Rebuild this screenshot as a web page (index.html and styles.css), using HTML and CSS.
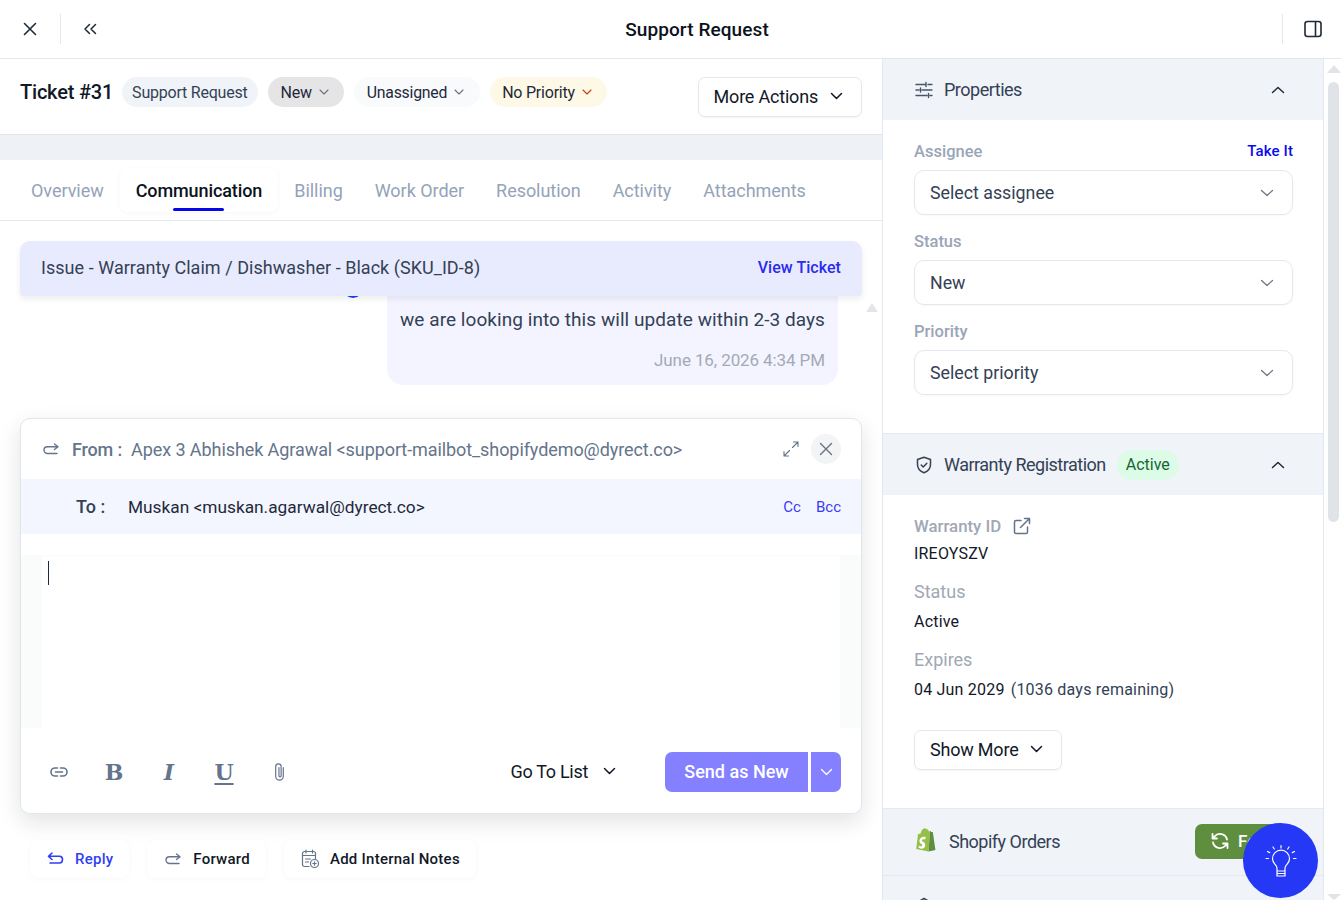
FILE: index.html
```html
<!DOCTYPE html>
<html lang="en">
<head>
    <meta charset="UTF-8">
    <meta name="viewport" content="width=device-width, initial-scale=1.0">
    <title>Support Request</title>
    <link rel="stylesheet" href="styles.css">
</head>
<body>
    <div class="app">
        <header class="topbar">
            <div class="topbar-left">
                <button class="icon-btn">
                    <svg width="18" height="18" viewBox="0 0 18 18" fill="none" stroke="#1f2937" stroke-width="1.6" stroke-linecap="round"><path d="M3.5 3.5l11 11M14.5 3.5l-11 11"/></svg>
                </button>
                <span class="topbar-sep"></span>
                <button class="icon-btn">
                    <svg width="16" height="16" viewBox="0 0 16 16" fill="none" stroke="#1f2937" stroke-width="1.5" stroke-linecap="round" stroke-linejoin="round"><path d="M7.5 3.5L3 8l4.500 4.500M13.500 3.500L9 8l4.500 4.500"/></svg>
                </button>
            </div>
            <h1 class="topbar-title">Support Request</h1>
            <div class="topbar-right">
                <span class="topbar-sep"></span>
                <button class="icon-btn">
                    <svg width="20" height="20" viewBox="0 0 20 20" fill="none" stroke="#1f2937" stroke-width="1.6"><rect x="2" y="2.5" width="16" height="15" rx="2.5"/><path d="M12.5 2.5v15"/></svg>
                </button>
            </div>
        </header>

        <div class="workspace">
            <main class="ticket">
                <div class="ticket-head">
                    <div class="ticket-title">Ticket #31</div>
                    <span class="pill pill-type">Support Request</span>
                    <span class="pill pill-status">New <svg class="pill-caret" width="10" height="6" viewBox="0 0 10 6" fill="none" stroke="#6b7280" stroke-width="1.1" stroke-linecap="round" stroke-linejoin="round"><path d="M1 1l4 4 4-4"/></svg></span>
                    <span class="pill pill-assignee">Unassigned <svg class="pill-caret" width="10" height="6" viewBox="0 0 10 6" fill="none" stroke="#6b7280" stroke-width="1.1" stroke-linecap="round" stroke-linejoin="round"><path d="M1 1l4 4 4-4"/></svg></span>
                    <span class="pill pill-priority">No Priority <svg class="pill-caret" width="10" height="6" viewBox="0 0 10 6" fill="none" stroke="#c2410c" stroke-width="1.1" stroke-linecap="round" stroke-linejoin="round"><path d="M1 1l4 4 4-4"/></svg></span>
                    <button class="btn-outline btn-more">More Actions
                        <svg width="13" height="8" viewBox="0 0 13 8" fill="none" stroke="#111827" stroke-width="1.5" stroke-linecap="round" stroke-linejoin="round"><path d="M1.500 1.500l5 5 5-5"/></svg>
                    </button>
                </div>
                <div class="band"></div>
                <nav class="tabs">
                    <a class="tab">Overview</a>
                    <a class="tab active">Communication</a>
                    <a class="tab">Billing</a>
                    <a class="tab">Work Order</a>
                    <a class="tab">Resolution</a>
                    <a class="tab">Activity</a>
                    <a class="tab">Attachments</a>
                </nav>

                <div class="thread">
                    <div class="issue-bar">
                        <span class="issue-text">Issue - Warranty Claim / Dishwasher - Black (SKU_ID-8)</span>
                        <a class="issue-link">View Ticket</a>
                    </div>
                    <div class="bubble">
                        <span class="bubble-avatar"></span>
                        <div class="bubble-text">we are looking into this will update within 2-3 days</div>
                        <div class="bubble-time">June 16, 2026 4:34 PM</div>
                    </div>
                    <span class="thread-arrow"></span>

                    <section class="composer">
                        <div class="from-row">
                            <svg width="16" height="13" viewBox="0 0 16 13" fill="none" stroke="#64748b" stroke-width="1.4" stroke-linecap="round" stroke-linejoin="round"><path d="M11.500 1L15 3.800l-3.500 2.700M14.500 3.800H4.500C2.500 3.800 1 5.300 1 7.100s1.500 3.400 3.500 3.400h9.500"/></svg>
                            <span class="from-label">From :</span>
                            <span class="from-value">Apex 3 Abhishek Agrawal &lt;support-mailbot_shopifydemo@dyrect.co&gt;</span>
                            <svg class="expand-icon" width="16" height="16" viewBox="0 0 16 16" fill="none" stroke="#64748b" stroke-width="1.1" stroke-linecap="round" stroke-linejoin="round"><path d="M9.500 6.500L15 1M10.500 1H15v4.500M6.500 9.500L1 15M1 10.500V15h4.500"/></svg>
                            <span class="close-round">
                                <svg width="14" height="14" viewBox="0 0 14 14" fill="none" stroke="#6b7280" stroke-width="1.4" stroke-linecap="round"><path d="M1.500 1.500l11 11M12.500 1.500l-11 11"/></svg>
                            </span>
                        </div>
                        <div class="to-row">
                            <span class="to-label">To :</span>
                            <span class="to-value">Muskan &lt;muskan.agarwal@dyrect.co&gt;</span>
                            <a class="cc-link">Cc</a>
                            <a class="cc-link">Bcc</a>
                        </div>
                        <div class="editor-wrap">
                            <div class="editor"><span class="caret"></span></div>
                        </div>
                        <div class="toolbar">
                            <button class="tool tool-link">
                                <svg width="18" height="10" viewBox="0 0 18 10" fill="none" stroke="#64748b" stroke-width="1.6" stroke-linecap="round"><path d="M7.500 1H5a4 4 0 0 0 0 8h2.500M10.500 1H13a4 4 0 0 1 0 8h-2.500M5.500 5h7"/></svg>
                            </button>
                            <button class="tool tool-b">B</button>
                            <button class="tool tool-i">I</button>
                            <button class="tool tool-u">U</button>
                            <button class="tool tool-clip">
                                <svg width="13" height="20" viewBox="0 0 12 18" fill="none" stroke="#64748b" stroke-width="1.1" stroke-linecap="round"><path d="M9.500 5v8a3.500 3.500 0 0 1-7 0V4a2.500 2.500 0 0 1 5 0v8.500a1 1 0 0 1-2 0V5"/></svg>
                            </button>
                            <button class="goto-list">Go To List
                                <svg width="13" height="8" viewBox="0 0 13 8" fill="none" stroke="#111827" stroke-width="1.5" stroke-linecap="round" stroke-linejoin="round"><path d="M1.500 1.500l5 5 5-5"/></svg>
                            </button>
                            <button class="send-btn">Send as New</button>
                            <button class="send-caret">
                                <svg width="13" height="8" viewBox="0 0 13 8" fill="none" stroke="#fff" stroke-width="1.3" stroke-linecap="round" stroke-linejoin="round"><path d="M1.500 1.500l5 5 5-5"/></svg>
                            </button>
                        </div>
                    </section>

                    <div class="actions">
                        <button class="action action-reply">
                            <svg width="17" height="14" viewBox="0 0 17 14" fill="none" stroke="#2f3ff5" stroke-width="1.6" stroke-linecap="round" stroke-linejoin="round"><path d="M5 1L1.500 4.300 5 7.500M2 4.300h10.500c1.800 0 3 1.300 3 3.300s-1.200 3.400-3 3.400H3"/></svg>
                            Reply
                        </button>
                        <button class="action action-forward">
                            <svg width="16" height="13" viewBox="0 0 16 13" fill="none" stroke="#64748b" stroke-width="1.4" stroke-linecap="round" stroke-linejoin="round"><path d="M11.500 1L15 3.800l-3.500 2.700M14.500 3.800H4.500C2.500 3.800 1 5.300 1 7.100s1.500 3.400 3.500 3.400h9.500"/></svg>
                            Forward
                        </button>
                        <button class="action action-notes">
                            <svg width="19" height="20" viewBox="0 0 19 20" fill="none" stroke="#64748b" stroke-width="1.2" stroke-linecap="round" stroke-linejoin="round"><path d="M8 17.500H3.500a2 2 0 0 1-2-2V4.500a2 2 0 0 1 2-2h9a2 2 0 0 1 2 2V10M5 1v3M11.500 1v3M1.500 6.500h13M4.500 10h5M4.500 13h3"/><circle cx="13.500" cy="14.500" r="4"/><path d="M13.500 12.800v3.400M11.800 14.500h3.400"/></svg>
                            Add Internal Notes
                        </button>
                    </div>
                </div>
            </main>

            <aside class="side">
                <div class="side-panel">
                    <div class="side-head">
                        <svg class="side-icon" width="18" height="18" viewBox="0 0 18 18" fill="none" stroke="#475569" stroke-width="1.4" stroke-linecap="round"><path d="M1 3.500h9M13 3.500h4M1 9h3M7 9h10M1 14.500h11M15 14.500h2M11 1.500v4M5.500 7v4M13.500 12.500v4"/></svg>
                        <span class="side-title">Properties</span>
                        <svg class="side-chevron" width="14" height="8" viewBox="0 0 14 8" fill="none" stroke="#1f2937" stroke-width="1.5" stroke-linecap="round" stroke-linejoin="round"><path d="M1.500 6.500L7 1.500l5.500 5"/></svg>
                    </div>
                    <div class="props">
                        <div class="field-label">
                            <span>Assignee</span>
                            <a class="take-it">Take It</a>
                        </div>
                        <div class="select">Select assignee
                            <svg width="14" height="8" viewBox="0 0 14 8" fill="none" stroke="#6b7280" stroke-width="1.2" stroke-linecap="round" stroke-linejoin="round"><path d="M1.500 1.500L7 6.500l5.500-5"/></svg>
                        </div>
                        <div class="field-label"><span>Status</span></div>
                        <div class="select">New
                            <svg width="14" height="8" viewBox="0 0 14 8" fill="none" stroke="#6b7280" stroke-width="1.2" stroke-linecap="round" stroke-linejoin="round"><path d="M1.500 1.500L7 6.500l5.500-5"/></svg>
                        </div>
                        <div class="field-label"><span>Priority</span></div>
                        <div class="select">Select priority
                            <svg width="14" height="8" viewBox="0 0 14 8" fill="none" stroke="#6b7280" stroke-width="1.2" stroke-linecap="round" stroke-linejoin="round"><path d="M1.500 1.500L7 6.500l5.500-5"/></svg>
                        </div>
                    </div>

                    <div class="side-head side-head-line">
                        <svg class="side-icon" width="18" height="18" viewBox="0 0 18 18" fill="none" stroke="#374151" stroke-width="1.5" stroke-linecap="round" stroke-linejoin="round"><path d="M9 1.200l6.500 2.300v5c0 4-2.800 6.900-6.500 8.300-3.700-1.400-6.500-4.300-6.500-8.300v-5z"/><path d="M6.200 9l2 2 3.600-3.700"/></svg>
                        <span class="side-title">Warranty Registration</span>
                        <span class="badge-active">Active</span>
                        <svg class="side-chevron" width="14" height="8" viewBox="0 0 14 8" fill="none" stroke="#1f2937" stroke-width="1.5" stroke-linecap="round" stroke-linejoin="round"><path d="M1.500 6.500L7 1.500l5.500 5"/></svg>
                    </div>
                    <div class="warranty">
                        <div class="w-label w-label-id">Warranty ID
                            <svg width="18" height="18" viewBox="0 0 18 18" fill="none" stroke="#64748b" stroke-width="1.5" stroke-linecap="round" stroke-linejoin="round"><path d="M8 3.500H3a1.500 1.500 0 0 0-1.500 1.500v10A1.500 1.500 0 0 0 3 16.500h10a1.500 1.500 0 0 0 1.500-1.500v-5M7.500 10.500L16.500 1.500M11.500 1.500h5v5"/></svg>
                        </div>
                        <div class="w-value">IREOYSZV</div>
                        <div class="w-label">Status</div>
                        <div class="w-value">Active</div>
                        <div class="w-label">Expires</div>
                        <div class="w-value">04 Jun 2029 <span class="w-muted">(1036 days remaining)</span></div>
                        <button class="btn-outline btn-show">Show More
                            <svg width="13" height="8" viewBox="0 0 13 8" fill="none" stroke="#111827" stroke-width="1.5" stroke-linecap="round" stroke-linejoin="round"><path d="M1.500 1.500l5 5 5-5"/></svg>
                        </button>
                    </div>

                    <div class="side-head side-head-shopify">
                        <svg class="shopify-logo" width="22" height="26" viewBox="0 0 22 26"><path fill="#95bf47" d="M15 3.200l-1 .3C13.500 2 12.700 1 11.500 1c-.1 0-.2 0-.3 0C10.800.5 10.400.3 10 .3 7.300.4 6 3.800 5.600 5.500l-2 .6c-.6.200-.6.200-.7.800L1.200 21l12.300 2.400 1.500-20.200z"/><path fill="#5e8e3e" d="M15.500 3.100c-.1 0-.3 0-.5.100l-1.500 20.200L20.500 22S17.900 4.400 17.800 4.300c0-.2-.2-.3-.300-.3l-1.300-.1-.7-.8z"/><path fill="#fff" d="M10.800 9.200l-.8 2.500s-.8-.4-1.700-.4c-1.400.1-1.400 1-1.400 1.200.1 1.200 3.200 1.500 3.400 4.300.1 2.300-1.200 3.800-3.200 3.900-2.300.1-3.600-1.200-3.600-1.200l.5-2.100s1.300 1 2.300.9c.7 0 .9-.6.900-.9-.1-1.500-2.600-1.500-2.800-4.100-.1-2.200 1.300-4.400 4.500-4.600 1.200 0 1.900.3 1.900.3z"/></svg>
                        <span class="side-title">Shopify Orders</span>
                        <button class="fetch-btn">
                            <svg width="18" height="18" viewBox="0 0 18 18" fill="none" stroke="#fff" stroke-width="1.8" stroke-linecap="round" stroke-linejoin="round"><path d="M16 7.500A7.200 7.200 0 0 0 3.500 4.500L1.500 6.500M1.500 2v4.500H6M2 10.500a7.200 7.200 0 0 0 12.500 3l2-2M16.500 16v-4.500H12"/></svg>
                            Fetch
                        </button>
                    </div>
                    <div class="side-head side-head-next">
                        <svg class="side-icon" width="18" height="18" viewBox="0 0 18 18" fill="none" stroke="#374151" stroke-width="1.5" stroke-linejoin="round"><path d="M9 1.500l7 4v7l-7 4-7-4v-7z"/></svg>
                        <span class="side-title">Bundle</span>
                    </div>
                </div>
                <div class="side-scrollbar">
                    <span class="scroll-up"></span>
                    <span class="scroll-thumb"></span>
                    <span class="scroll-down"></span>
                </div>
            </aside>
        </div>

        <button class="help-fab">
            <svg width="32" height="34" viewBox="0 0 32 34" fill="none" stroke="#fff" stroke-width="1.2" stroke-linecap="round" stroke-linejoin="round"><path d="M12 27v-3c0-1.500-1-2.500-2-3.700-1.200-1.400-2.500-3-2.500-5.600a8.500 8.500 0 0 1 17 0c0 2.600-1.300 4.200-2.500 5.600-1 1.200-2 2.200-2 3.700v3M12 27h8v5h-8zM12 29.500h8M16 1.500V4M8 3l1.300 2M24 3l-1.300 2M2.500 7.500l2.200 1.100M29.500 7.500l-2.200 1.100M1 14.500h2.500M28.500 14.500H31"/></svg>
        </button>
    </div>
</body>
</html>
```

FILE: styles.css
```css
* {
    box-sizing: border-box;
}

html, body {
    margin: 0;
    height: 100%;
    overflow: hidden;
}

body {
    font-family: Roboto, 'Noto Sans', sans-serif;
    color: #111827;
    background: #fff;
}

button {
    font-family: inherit;
    border: none;
    background: none;
    padding: 0;
    cursor: pointer;
}

.app {
    height: 900px;
    display: flex;
    flex-direction: column;
    position: relative;
}

/* top bar */
.topbar {
    height: 59px;
    flex: none;
    display: flex;
    align-items: center;
    border-bottom: 1px solid #e2e8f0;
    padding: 0 18px 0 21px;
}

.topbar-left, .topbar-right {
    display: flex;
    align-items: center;
    width: 400px;
}

.topbar-right {
    justify-content: flex-end;
    width: 60px;
}

.topbar-left .topbar-sep {
    margin: 0 21px 0 21px;
}

.topbar-right .topbar-sep {
    margin-right: 20px;
}

.topbar-sep {
    width: 1px;
    height: 30px;
    background: #e2e8f0;
}

.icon-btn {
    display: flex;
}

.topbar-title {
    flex: 1;
    text-align: center;
    margin: 0 0 0 56px;
    font-size: 19px;
    font-weight: 500;
    letter-spacing: 0.1px;
    color: #0b1220;
    padding-right: 346px;
}

.workspace {
    flex: 1;
    display: flex;
    min-height: 0;
}

/* left column */
.ticket {
    width: 883px;
    flex: none;
    border-right: 1px solid #e2e8f0;
    display: flex;
    flex-direction: column;
    overflow: hidden;
}

.ticket-head {
    height: 75px;
    flex: none;
    display: flex;
    align-items: flex-start;
    padding: 18px 20px 0;
}

.ticket-title {
    font-size: 20px;
    font-weight: 500;
    letter-spacing: -0.2px;
    line-height: 30px;
    color: #111827;
    margin-right: 9px;
}

.pill {
    height: 30px;
    display: inline-flex;
    align-items: center;
    border-radius: 15px;
    font-size: 16px;
    letter-spacing: -0.22px;
    color: #1e293b;
    padding: 0 10px;
    margin-right: 10px;
    white-space: nowrap;
}

.pill-caret {
    margin-left: 7px;
}

.pill-type {
    background: #f0f4f9;
    color: #334155;
    padding: 0 11px 0 10px;
}

.pill-status {
    background: #e5e5e5;
    padding: 0 15px 0 12px;
}

.pill-assignee {
    background: #f8fafc;
    font-size: 15.8px;
    padding: 0 16px 0 13px;
}

.pill-priority {
    background: #fef9e7;
    padding: 0 15px 0 12px;
}

.btn-outline {
    display: inline-flex;
    align-items: center;
    height: 40px;
    border: 1px solid #e2e8f0;
    border-radius: 7px;
    background: #fff;
    font-size: 18px;
    letter-spacing: -0.2px;
    color: #111827;
    box-shadow: 0 1px 2px rgba(15, 23, 42, 0.04);
}

.btn-more {
    margin-left: auto;
    padding: 0 18px 2px 15px;
    gap: 12px;
}

.band {
    height: 26px;
    flex: none;
    background: #eef1f5;
    border-top: 1px solid #e2e6ea;
}

.tabs {
    height: 61px;
    flex: none;
    display: flex;
    align-items: center;
    padding: 0 16px 0 15px;
    border-bottom: 1px solid #e2e8f0;
}

.tab {
    font-size: 18px;
    letter-spacing: -0.04px;
    color: #94a3b8;
    padding: 0 16px;
    height: 44px;
    line-height: 45px;
    position: relative;
}

.tab.active {
    color: #0b1220;
    font-weight: 500;
    letter-spacing: -0.1px;
    background: #fff;
    border-radius: 8px;
    box-shadow: 0 1px 4px rgba(15, 23, 42, 0.04);
}

.tab.active::after {
    content: "";
    position: absolute;
    left: 53px;
    bottom: 1px;
    width: 51px;
    height: 3px;
    border-radius: 2px;
    background: #0606e8;
}

/* conversation */
.thread {
    flex: 1;
    position: relative;
    padding: 20px 20px 0;
    min-height: 0;
}

.issue-bar {
    position: relative;
    z-index: 2;
    height: 55px;
    display: flex;
    align-items: center;
    justify-content: space-between;
    padding: 0 21px 2px;
    background: #e8eafd;
    border-radius: 10px 10px 4px 4px;
    box-shadow: 0 3px 6px rgba(15, 23, 42, 0.08);
}

.issue-text {
    font-size: 18px;
    letter-spacing: 0.04px;
    color: #334155;
}

.issue-link {
    font-size: 16px;
    font-weight: 500;
    letter-spacing: 0.05px;
    color: #2a2af0;
}

.bubble {
    position: relative;
    width: 451px;
    height: 89px;
    margin: 0 24px 0 auto;
    padding: 11px 13px 0;
    background: #f3f4ff;
    border-radius: 0 0 16px 16px;
}

.bubble-avatar {
    position: absolute;
    left: -44px;
    top: -18px;
    width: 20px;
    height: 20px;
    border-radius: 50%;
    background: #1f3bf5;
}

.bubble-text {
    font-size: 19px;
    letter-spacing: 0.06px;
    color: #334155;
    line-height: 26px;
    white-space: nowrap;
}

.bubble-time {
    margin-top: 17px;
    text-align: right;
    font-size: 17px;
    letter-spacing: -0.1px;
    color: #a3aab5;
}

.thread-arrow {
    position: absolute;
    left: 866px;
    top: 82px;
    border: 6px solid transparent;
    border-top: 0;
    border-bottom: 9px solid #e2e5ea;
}

.composer {
    margin-top: 33px;
    height: 396px;
    width: 842px;
    background: #fff;
    border: 1px solid #e2e6ec;
    border-radius: 10px;
    box-shadow: 0 8px 22px rgba(15, 23, 42, 0.12);
    display: flex;
    flex-direction: column;
    overflow: hidden;
}

.from-row {
    height: 60px;
    flex: none;
    display: flex;
    align-items: center;
    padding: 0 20px 0 22px;
    font-size: 18px;
    color: #64748b;
}

.from-label {
    margin-left: 13px;
    margin-right: 9px;
    font-weight: 500;
    letter-spacing: -0.15px;
}

.from-value {
    letter-spacing: -0.08px;
}

.expand-icon {
    margin-left: auto;
    margin-right: 12px;
}

.close-round {
    width: 30px;
    height: 30px;
    border-radius: 50%;
    background: #f3f4f6;
    display: flex;
    align-items: center;
    justify-content: center;
}

.to-row {
    height: 55px;
    flex: none;
    display: flex;
    align-items: center;
    background: #f3f6fe;
    padding: 0 20px 0 55px;
}

.to-label {
    width: 52px;
    font-size: 18px;
    font-weight: 500;
    color: #334155;
}

.to-value {
    font-size: 17.3px;
    color: #1e293b;
    flex: 1;
}

.cc-link {
    font-size: 15px;
    color: #3b3bf2;
    margin-left: 15px;
}

.editor-wrap {
    flex: 1;
    padding-top: 21px;
    min-height: 0;
}

.editor {
    height: 100%;
    background: #fff;
    border: solid #fafbfb;
    border-width: 1px 21px 0;
    padding: 5px 6px 0;
}

.caret {
    display: block;
    width: 1px;
    height: 24px;
    background: #1e293b;
}

.toolbar {
    height: 85px;
    flex: none;
    background: #fff;
    display: flex;
    align-items: flex-start;
    padding: 24px 20px 0 23px;
}

.tool {
    width: 30px;
    height: 40px;
    display: flex;
    align-items: center;
    justify-content: center;
    margin-right: 25px;
    color: #64748b;
    font-family: 'DejaVu Serif', serif;
    font-weight: 700;
    font-size: 22px;
}

.tool-i {
    font-style: italic;
}

.tool-u {
    text-decoration: underline;
    text-underline-offset: 3px;
    text-decoration-thickness: 2px;
}

.goto-list {
    margin-left: auto;
    height: 40px;
    display: flex;
    align-items: center;
    gap: 15px;
    padding-bottom: 2px;
    font-size: 18px;
    letter-spacing: -0.3px;
    color: #111827;
    margin-right: 49px;
}

.send-btn {
    height: 40px;
    width: 143px;
    padding-bottom: 2px;
    background: #8480ff;
    color: #fff;
    font-size: 18px;
    font-weight: 500;
    border-radius: 7px 0 0 7px;
    margin-right: 3px;
}

.send-caret {
    height: 40px;
    width: 30px;
    background: #8480ff;
    border-radius: 0 7px 7px 0;
    display: flex;
    align-items: center;
    justify-content: center;
}

.actions {
    display: flex;
    margin: 26px 0 0 10px;
    gap: 18px;
}

.action {
    height: 38px;
    display: flex;
    align-items: center;
    gap: 11px;
    padding: 0 16px 0 17px;
    font-size: 15px;
    font-weight: 500;
    letter-spacing: 0.25px;
    color: #111827;
    background: #fff;
    border-radius: 8px;
    box-shadow: 0 1px 6px rgba(15, 23, 42, 0.03);
}

.action-reply {
    color: #2f3ff5;
}

.action-forward {
    padding-left: 18px;
    gap: 12px;
}

.action-notes {
    gap: 10px;
}

/* right column */
.side {
    flex: 1;
    display: flex;
    min-width: 0;
}

.side-panel {
    width: 441px;
    flex: none;
    border-right: 1px solid #e2e8f0;
    overflow: hidden;
}

.side-head {
    height: 61px;
    display: flex;
    align-items: center;
    padding: 0 38px 0 32px;
    background: #f0f3f8;
}

.side-head-line {
    height: 62px;
    border-top: 1px solid #e5e8ee;
}

.side-head-shopify {
    height: 68px;
    padding-bottom: 2px;
    border-top: 1px solid #e5e8ee;
    border-bottom: 1px solid #e5e8ee;
}

.side-head-next {
    height: 50px;
    align-items: flex-start;
    padding-top: 21px;
}

.side-icon {
    margin-right: 11px;
    flex: none;
}

.side-title {
    font-size: 18px;
    letter-spacing: -0.5px;
    color: #334155;
}

.side-chevron {
    margin-left: auto;
}

.badge-active {
    height: 30px;
    display: inline-flex;
    align-items: center;
    padding: 0 9px;
    margin-left: 11px;
    border-radius: 15px;
    background: #dcfce7;
    color: #166534;
    font-size: 16px;
}

.props {
    height: 313px;
    padding: 19px 30px 0 31px;
}

.field-label {
    display: flex;
    justify-content: space-between;
    align-items: center;
    height: 24px;
    font-size: 16.5px;
    font-weight: 500;
    color: #9aa5b8;
    margin-bottom: 7px;
}

.take-it {
    font-size: 15px;
    font-weight: 500;
    letter-spacing: 0.1px;
    color: #0a0af0;
}

.select {
    height: 45px;
    display: flex;
    align-items: center;
    justify-content: space-between;
    padding: 0 18px 0 15px;
    border: 1px solid #e2e8f0;
    border-radius: 10px;
    font-size: 17.8px;
    color: #334155;
    margin-bottom: 14px;
    box-shadow: 0 1px 2px rgba(15, 23, 42, 0.03);
}

.warranty {
    height: 313px;
    padding: 20px 30px 0 31px;
}

.w-label {
    font-size: 18px;
    line-height: 24px;
    color: #a0a8b5;
    margin-top: 15px;
}

.w-label-id {
    display: flex;
    align-items: center;
    gap: 12px;
    height: 21px;
    font-size: 16.8px;
    font-weight: 500;
    margin-top: 0;
}

.w-value {
    margin-top: 7px;
    font-size: 16px;
    line-height: 22px;
    color: #111827;
    letter-spacing: 0.2px;
}

.w-muted {
    color: #334155;
    margin-left: 2px;
}

.btn-show {
    margin-top: 29px;
    padding: 0 18px 2px 15px;
    gap: 11px;
}

.shopify-logo {
    margin-right: 12px;
}

.fetch-btn {
    margin-left: auto;
    margin-right: -10px;
    height: 35px;
    width: 100px;
    flex: none;
    display: flex;
    align-items: center;
    gap: 9px;
    padding-left: 16px;
    background: #5e8e3e;
    color: #fff;
    font-size: 17px;
    font-weight: 500;
    border-radius: 7px;
}

.side-scrollbar {
    flex: 1;
    position: relative;
    background: #fff;
}

.scroll-thumb {
    position: absolute;
    left: 4px;
    top: 23px;
    width: 11px;
    height: 440px;
    border-radius: 6px;
    background: #e0e3e8;
}

.scroll-up, .scroll-down {
    position: absolute;
    left: 3px;
    border: 7px solid transparent;
}

.scroll-up {
    top: 6px;
    border-top: 0;
    border-bottom: 8px solid #e0e3e8;
}

.scroll-down {
    bottom: 0;
    border-bottom: 0;
    border-top: 6px solid #e0e3e8;
}

.help-fab {
    position: absolute;
    left: 1243px;
    top: 823px;
    width: 75px;
    height: 75px;
    border-radius: 50%;
    background: #2438f5;
    display: flex;
    align-items: center;
    justify-content: center;
}
```
